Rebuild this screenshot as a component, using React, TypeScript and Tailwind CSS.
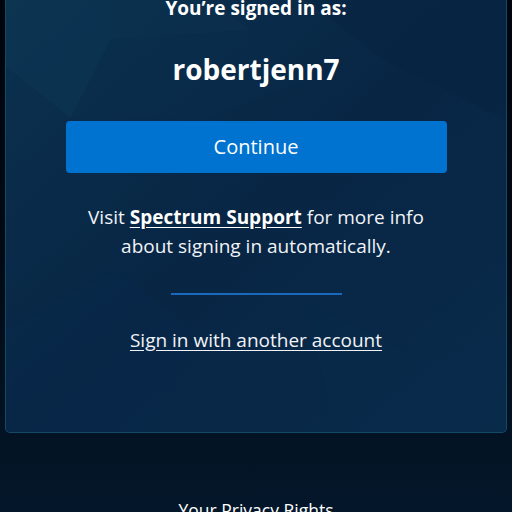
const font = { fontFamily: '"Open Sans", "Noto Sans", sans-serif' };

function Facets() {
  return (
    <svg
      className="pointer-events-none absolute inset-0 h-full w-full"
      viewBox="0 0 502 432"
      preserveAspectRatio="none"
    >
      <polygon points="0,0 105,0 105,40 65,118 0,66" fill="#0d3b58" opacity="0.35" />
      <polygon points="105,0 205,0 245,30 105,40" fill="#0c3552" opacity="0.3" />
      <polygon points="105,40 245,30 300,80 200,120 65,118" fill="#0a2f4c" opacity="0.3" />
      <polygon points="300,0 502,0 502,120 380,60" fill="#072340" opacity="0.4" />
      <polygon points="0,330 110,270 190,330 150,432 0,432" fill="#0a2b4c" opacity="0.35" />
      <polygon points="300,300 420,360 502,330 502,432 330,432" fill="#092a4a" opacity="0.35" />
    </svg>
  );
}

export default function App() {
  return (
    <div
      className="flex h-[512px] w-[512px] flex-col overflow-hidden bg-gradient-to-b from-[#00050c] via-[#010a14] to-[#04172a] text-white"
      style={font}
    >
      <div className="relative mx-[5px] h-[433px] shrink-0 overflow-hidden rounded-b-[5px] border border-t-0 border-[#134868] bg-gradient-to-br from-[#0b324f] via-[#082544] to-[#0a2b4b]">
        <Facets />
        <div className="relative flex flex-col items-center">
          <h2 className="-mt-[6px] text-[19px] font-bold leading-[28px] text-white">
            You’re signed in as:
          </h2>
          <p className="mt-[30px] text-[28px] font-bold leading-[34px]">robertjenn7</p>
          <button className="mt-[35px] h-[52px] w-[381px] rounded-[4px] bg-[#0073d1] text-[20px] font-medium text-white">
            Continue
          </button>
          <p className="mt-[30px] text-center text-[19px] leading-[29px] text-[#f0f3f7]">
            Visit{' '}
            <a className="font-bold text-white underline underline-offset-[3px]">Spectrum Support</a>{' '}
            for more info
            <br />
            about signing in automatically.
          </p>
          <div className="mt-[32px] h-[2px] w-[171px] bg-[#1a69bd]" />
          <a className="mt-[31px] text-[19px] leading-[28px] text-[#f0f3f7] underline underline-offset-[3px]">
            Sign in with another account
          </a>
        </div>
      </div>
      <div className="flex flex-1 flex-col items-center">
        <p className="mt-[64px] text-[17.5px] font-medium text-white">Your Privacy Rights</p>
      </div>
    </div>
  );
}
